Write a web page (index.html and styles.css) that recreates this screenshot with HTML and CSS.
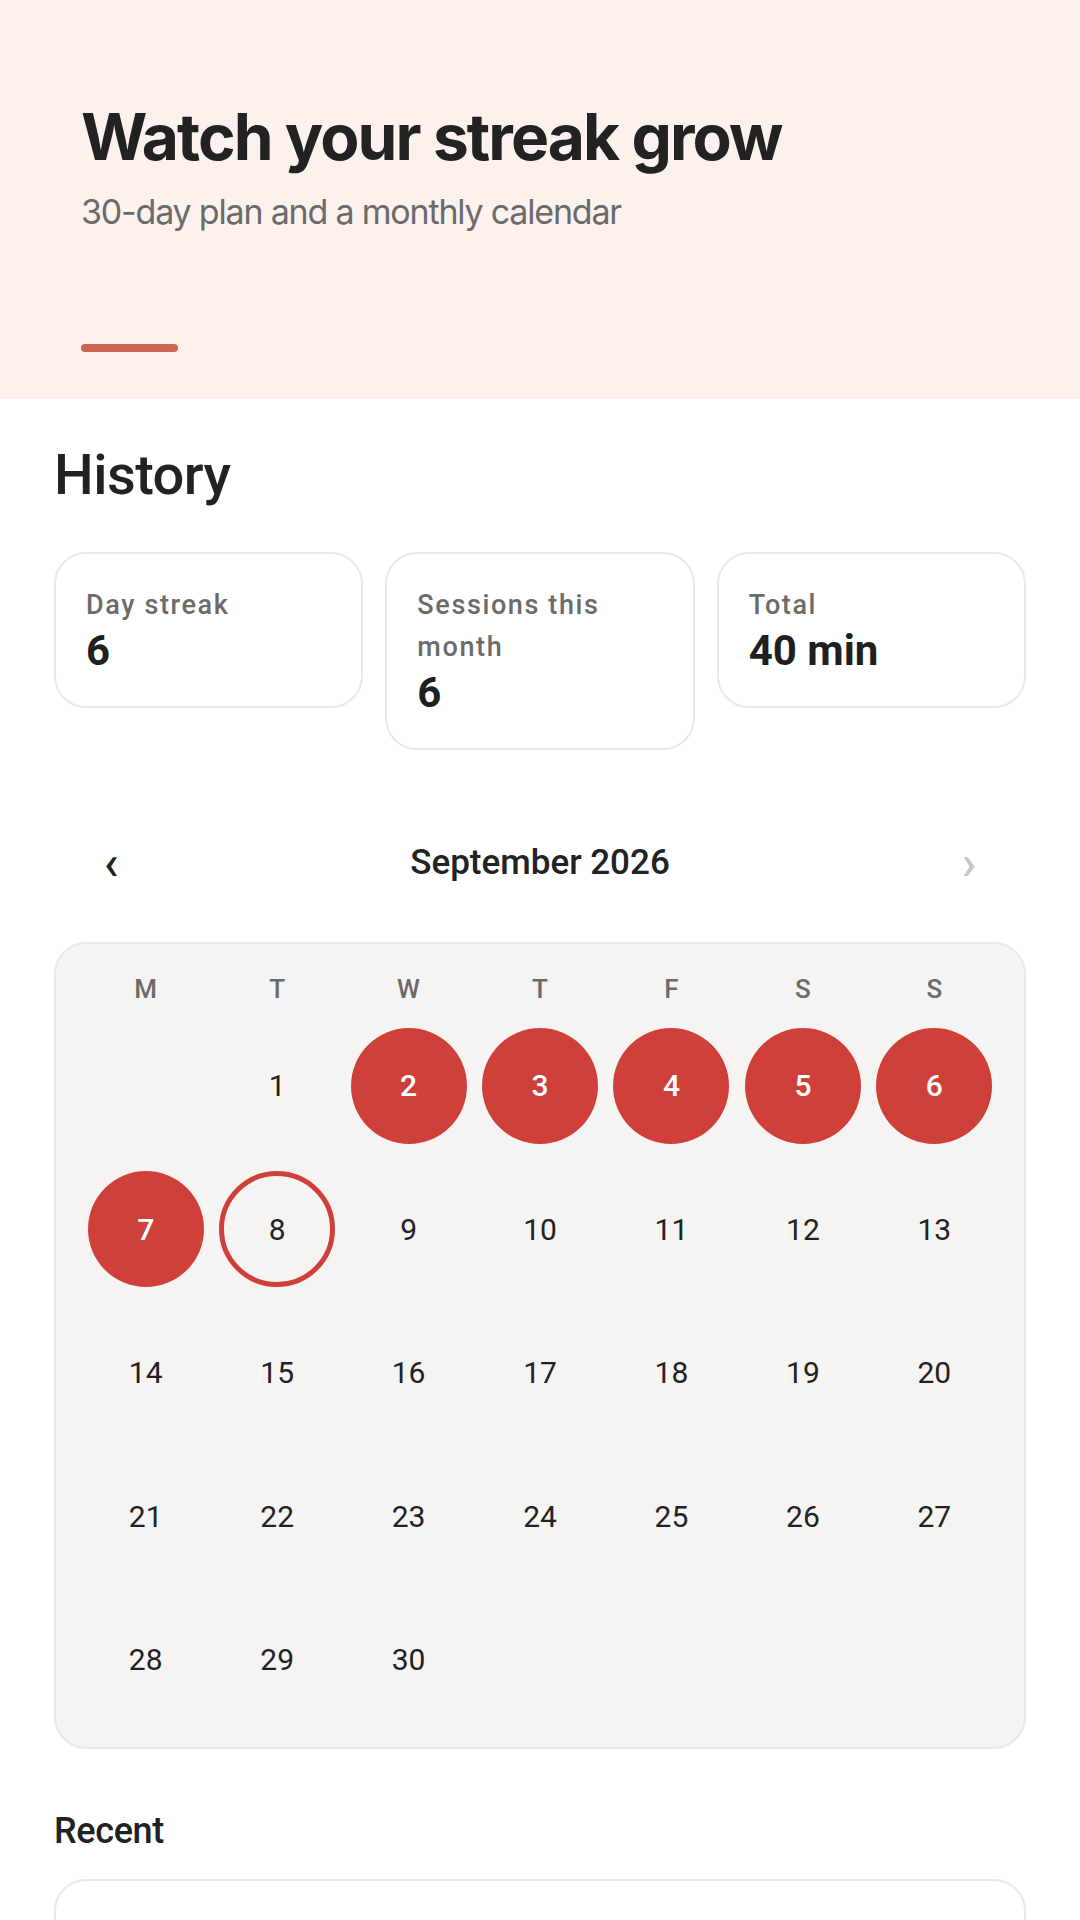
FILE: index.html
```html
<!DOCTYPE html>
<html lang="en">
<head>
    <meta charset="UTF-8">
    <meta name="viewport" content="width=device-width, initial-scale=1.0">
    <title>History</title>
    <link rel="stylesheet" href="styles.css">
</head>
<body>
    <header class="hero">
        <h1>Watch your streak grow</h1>
        <p class="hero-sub">30-day plan and a monthly calendar</p>
        <div class="hero-bar"></div>
    </header>

    <main class="content">
        <h2 class="section-title">History</h2>

        <div class="stats">
            <div class="stat-card">
                <div class="stat-label">Day streak</div>
                <div class="stat-value">6</div>
            </div>
            <div class="stat-card">
                <div class="stat-label">Sessions this month</div>
                <div class="stat-value">6</div>
            </div>
            <div class="stat-card">
                <div class="stat-label">Total</div>
                <div class="stat-value">40 min</div>
            </div>
        </div>

        <div class="month-nav">
            <button class="nav-btn">&lsaquo;</button>
            <div class="month-name">September 2026</div>
            <button class="nav-btn disabled">&rsaquo;</button>
        </div>

        <div class="calendar">
            <div class="weekdays">
                <span>M</span><span>T</span><span>W</span><span>T</span><span>F</span><span>S</span><span>S</span>
            </div>
            <div class="days">
                <div class="day"></div>
                <div class="day"><span>1</span></div>
                <div class="day"><span class="done">2</span></div>
                <div class="day"><span class="done">3</span></div>
                <div class="day"><span class="done">4</span></div>
                <div class="day"><span class="done">5</span></div>
                <div class="day"><span class="done">6</span></div>

                <div class="day"><span class="done">7</span></div>
                <div class="day"><span class="today">8</span></div>
                <div class="day"><span>9</span></div>
                <div class="day"><span>10</span></div>
                <div class="day"><span>11</span></div>
                <div class="day"><span>12</span></div>
                <div class="day"><span>13</span></div>

                <div class="day"><span>14</span></div>
                <div class="day"><span>15</span></div>
                <div class="day"><span>16</span></div>
                <div class="day"><span>17</span></div>
                <div class="day"><span>18</span></div>
                <div class="day"><span>19</span></div>
                <div class="day"><span>20</span></div>

                <div class="day"><span>21</span></div>
                <div class="day"><span>22</span></div>
                <div class="day"><span>23</span></div>
                <div class="day"><span>24</span></div>
                <div class="day"><span>25</span></div>
                <div class="day"><span>26</span></div>
                <div class="day"><span>27</span></div>

                <div class="day"><span>28</span></div>
                <div class="day"><span>29</span></div>
                <div class="day"><span>30</span></div>
            </div>
        </div>

        <h3 class="recent-title">Recent</h3>
        <div class="recent-card"></div>
    </main>
</body>
</html>
```

FILE: styles.css
```css
body {
    margin: 0;
    padding: 0;
    background: #fff;
    font-family: Roboto, "Liberation Sans", sans-serif;
    color: #222;
    overflow: hidden;
}

.hero {
    background-color: #fdf1ee;
    padding: 97px 81px 47px;
}

.hero h1 {
    margin: 0;
    font-family: Inter, Roboto, sans-serif;
    font-size: 64px;
    font-weight: 700;
    line-height: 1.25;
    letter-spacing: -0.03em;
    color: #222;
}

.hero-sub {
    margin: 11px 0 0;
    font-family: Inter, Roboto, sans-serif;
    font-size: 34px;
    font-weight: 400;
    line-height: 1.4;
    letter-spacing: -0.035em;
    color: #6b6b6b;
}

.hero-bar {
    width: 97px;
    height: 8px;
    border-radius: 4px;
    background-color: #cd6751;
    margin-top: 108px;
}

.content {
    padding: 43px 54px 0;
}

.section-title {
    margin: 0;
    font-size: 56px;
    font-weight: 500;
    line-height: 1.2;
    letter-spacing: -0.01em;
}

.stats {
    margin-top: 43px;
    display: grid;
    grid-template-columns: repeat(3, 1fr);
    gap: 22px;
    align-items: start;
}

.stat-card {
    border: 2px solid #e9e9e9;
    border-radius: 32px;
    padding: 30px;
}

.stat-label {
    font-size: 27px;
    font-weight: 500;
    line-height: 42px;
    letter-spacing: 0.06em;
    color: #6b6b6b;
}

.stat-value {
    font-size: 42px;
    font-weight: 700;
    line-height: 1.2;
    color: #1f1f1f;
}

.month-nav {
    margin-top: 64px;
    height: 96px;
    display: flex;
    align-items: center;
    justify-content: space-between;
}

.nav-btn {
    width: 114px;
    height: 96px;
    border: none;
    background: none;
    padding: 0;
    font-family: Roboto, sans-serif;
    font-size: 48px;
    font-weight: 500;
    color: #222;
    cursor: pointer;
}

.nav-btn.disabled {
    color: #c9c5c3;
    cursor: default;
}

.month-name {
    font-size: 35px;
    font-weight: 500;
    color: #222;
}

.calendar {
    margin-top: 32px;
    background-color: #f5f4f2;
    border: 2px solid #ebe9e7;
    border-radius: 32px;
    padding: 26px 24px 22px;
}

.weekdays {
    display: grid;
    grid-template-columns: repeat(7, 1fr);
    text-align: center;
    font-size: 26px;
    font-weight: 500;
    line-height: 38px;
    color: #6b6b6b;
}

.days {
    margin-top: 12px;
    display: grid;
    grid-template-columns: repeat(7, 1fr);
    row-gap: 12px;
}

.day {
    aspect-ratio: 1;
    display: flex;
    align-items: center;
    justify-content: center;
}

.day span {
    width: 116px;
    height: 116px;
    border-radius: 50%;
    box-sizing: border-box;
    display: flex;
    align-items: center;
    justify-content: center;
    font-size: 30px;
    font-weight: 400;
    color: #222;
}

.day .done {
    background-color: #d0403a;
    color: #fff;
    font-weight: 500;
}

.day .today {
    border: 5px solid #d0403a;
}

.recent-title {
    margin: 60px 0 0;
    font-size: 36px;
    font-weight: 500;
    line-height: 1.25;
    letter-spacing: -0.01em;
}

.recent-card {
    margin-top: 25px;
    height: 200px;
    border: 2px solid #e9e9e9;
    border-radius: 32px;
}
```
